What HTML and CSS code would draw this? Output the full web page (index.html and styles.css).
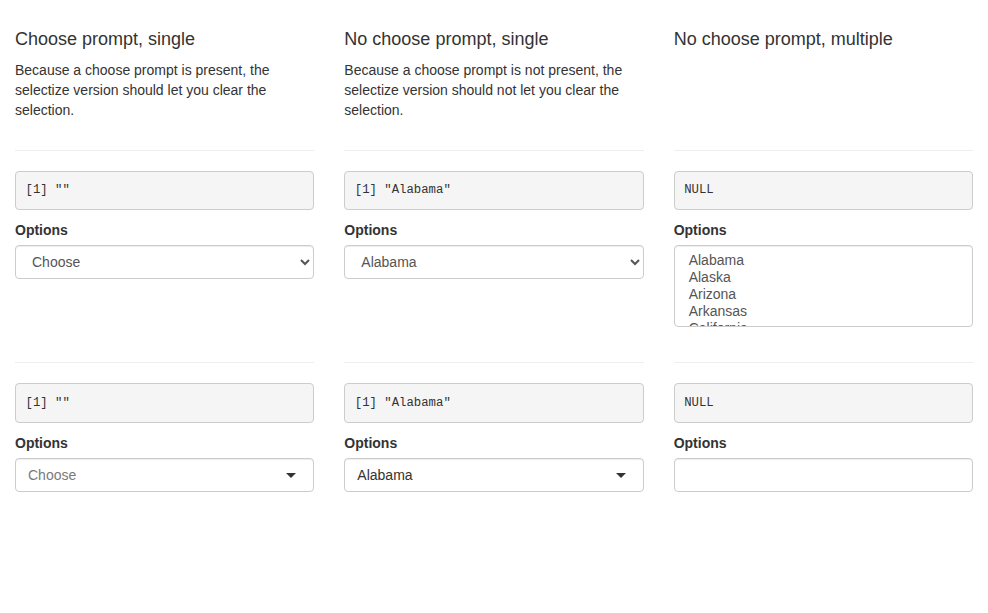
FILE: index.html
```html
<!DOCTYPE html>
<html>
<head>
<meta charset="utf-8">
<link rel="stylesheet" href="styles.css">
</head>
<body>
<div class="container">
  <div class="row">
    <div class="col">
      <h4 class="title">Choose prompt, single</h4>
      <p class="desc">Because a choose prompt is present, the selectize version should let you clear the selection.</p>
    </div>
    <div class="col">
      <h4 class="title">No choose prompt, single</h4>
      <p class="desc">Because a choose prompt is not present, the selectize version should not let you clear the selection.</p>
    </div>
    <div class="col">
      <h4 class="title">No choose prompt, multiple</h4>
    </div>
  </div>

  <div class="row">
    <div class="col">
      <hr class="rule">
      <pre class="out">[1] ""</pre>
      <div class="form-group">
        <label class="lbl">Options</label>
        <select class="form-control">
          <option>Choose</option>
          <option>Alabama</option>
          <option>Alaska</option>
        </select>
      </div>
    </div>
    <div class="col">
      <hr class="rule">
      <pre class="out">[1] "Alabama"</pre>
      <div class="form-group">
        <label class="lbl">Options</label>
        <select class="form-control">
          <option>Alabama</option>
          <option>Alaska</option>
          <option>Arizona</option>
        </select>
      </div>
    </div>
    <div class="col">
      <hr class="rule">
      <pre class="out">NULL</pre>
      <div class="form-group">
        <label class="lbl">Options</label>
        <div class="listbox">
          <div class="opt">Alabama</div>
          <div class="opt">Alaska</div>
          <div class="opt">Arizona</div>
          <div class="opt">Arkansas</div>
          <div class="opt">California</div>
        </div>
      </div>
    </div>
  </div>

  <div class="row">
    <div class="col">
      <hr class="rule">
      <pre class="out">[1] ""</pre>
      <div class="form-group">
        <label class="lbl">Options</label>
        <div class="sel-input">
          <span class="placeholder">Choose</span>
          <span class="caret"></span>
        </div>
      </div>
    </div>
    <div class="col">
      <hr class="rule">
      <pre class="out">[1] "Alabama"</pre>
      <div class="form-group">
        <label class="lbl">Options</label>
        <div class="sel-input">
          <span class="item">Alabama</span>
          <span class="caret"></span>
        </div>
      </div>
    </div>
    <div class="col">
      <hr class="rule">
      <pre class="out">NULL</pre>
      <div class="form-group">
        <label class="lbl">Options</label>
        <div class="sel-input multi"></div>
      </div>
    </div>
  </div>
</div>
</body>
</html>
```

FILE: styles.css
```css
* { box-sizing: border-box; }
html, body { margin: 0; padding: 0; background: #fff; }
body {
  font-family: "Liberation Sans", Arial, sans-serif;
  font-size: 14px;
  line-height: 20px;
  color: #333;
}
.container { padding: 0 15px; }
.row { display: flex; margin: 0 -15px; }
.col { width: 33.3333%; padding: 0 15px; }

.title {
  font-size: 18px;
  font-weight: 500;
  line-height: 19.8px;
  margin: 30px 0 10px;
  color: #333;
}
.desc { margin: 0 0 10px; }

.rule {
  margin: 20px 0;
  border: 0;
  border-top: 1px solid #eee;
  height: 0;
}

.out {
  margin: 0 0 10px;
  padding: 9.5px;
  background: #f5f5f5;
  border: 1px solid #ccc;
  border-radius: 4px;
  font-family: "Liberation Mono", "DejaVu Sans Mono", monospace;
  font-size: 12.3px;
  line-height: 18.57px;
  color: #333;
  white-space: pre;
}

.form-group { margin-bottom: 15px; }
.lbl {
  display: block;
  font-weight: bold;
  margin-bottom: 5px;
}

.form-control {
  display: block;
  width: 100%;
  height: 34px;
  padding: 6px 12px;
  font-family: "Liberation Sans", Arial, sans-serif;
  font-size: 14px;
  color: #555;
  background: #fff;
  border: 1px solid #ccc;
  border-radius: 4px;
  box-shadow: inset 0 1px 1px rgba(0,0,0,.075);
}

.listbox {
  height: 82px;
  overflow: hidden;
  padding: 6px 12px;
  border: 1px solid #ccc;
  border-radius: 4px;
  box-shadow: inset 0 1px 1px rgba(0,0,0,.075);
  color: #555;
}
.opt { line-height: 17px; padding-left: 2px; }

.sel-input {
  display: flex;
  align-items: center;
  justify-content: space-between;
  height: 34px;
  padding: 6px 17px 6px 12px;
  border: 1px solid #ccc;
  border-radius: 4px;
  box-shadow: inset 0 1px 1px rgba(0,0,0,.075);
  background: #fff;
}
.placeholder { color: #7a7a7a; }
.item { color: #333; }
.caret {
  width: 0;
  height: 0;
  border-style: solid;
  border-width: 5px 5px 0 5px;
  border-color: #333 transparent transparent transparent;
  margin-top: 1px;
}
```
